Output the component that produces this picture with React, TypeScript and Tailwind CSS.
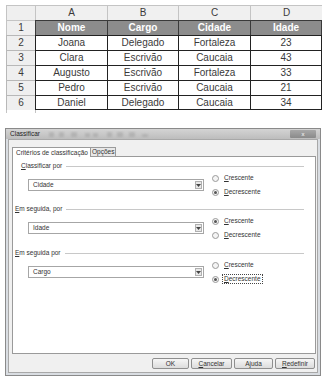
import React from 'react';

const cols = [
  { letter: 'A', w: 'w-[72px]' },
  { letter: 'B', w: 'w-[71px]' },
  { letter: 'C', w: 'w-[72px]' },
  { letter: 'D', w: 'w-[72px]' },
];

const rows = [
  ['Joana', 'Delegado', 'Fortaleza', '23'],
  ['Clara', 'Escrivão', 'Caucaia', '43'],
  ['Augusto', 'Escrivão', 'Fortaleza', '33'],
  ['Pedro', 'Escrivão', 'Caucaia', '21'],
  ['Daniel', 'Delegado', 'Caucaia', '34'],
];

const Sheet: React.FC = () => (
  <div className="ml-[6px] mt-[5px] font-['Liberation_Sans',Arial,sans-serif] text-[10px] text-[#3a3a3a]">
    {/* column letters */}
    <div className="flex h-[15px]">
      <div className="w-[29px] bg-[#efefef] border-t border-l border-[#c4c4c4]" />
      {cols.map(c => (
        <div key={c.letter} className={`${c.w} bg-[#f0f0f0] border-t border-l border-[#c4c4c4] flex items-center justify-center leading-none`}>
          {c.letter}
        </div>
      ))}
    </div>
    {/* header row */}
    <div className="flex h-[15px]">
      <div className="w-[29px] bg-[#efefef] border-t border-l border-[#c4c4c4] flex items-center justify-center leading-none">1</div>
      {['Nome', 'Cargo', 'Cidade', 'Idade'].map((t, i) => (
        <div key={t} className={`${cols[i].w} bg-[#8c8c8c] border-t border-l border-[#3a3a3a] ${i === 3 ? 'border-r' : ''} flex items-center justify-center text-white font-bold leading-none`}>
          {t}
        </div>
      ))}
    </div>
    {rows.map((r, ri) => (
      <div key={ri} className="flex h-[15px]">
        <div className="w-[29px] bg-[#efefef] border-t border-l border-[#b8b8b8] flex items-center justify-center leading-none">{ri + 2}</div>
        {r.map((t, i) => (
          <div key={i} className={`${cols[i].w} bg-white border-t border-l border-[#222] ${i === 3 ? 'border-r' : ''} ${ri === 4 ? 'border-b' : ''} flex items-center justify-center leading-none`}>
            {t}
          </div>
        ))}
      </div>
    ))}
    <div className="flex h-[3px]">
      <div className="w-[29px] border-l border-[#c4c4c4]" />
      <div className="w-[72px] border-l border-[#c4c4c4]" />
    </div>
  </div>
);

const Radio: React.FC<{ checked?: boolean; label: string; focus?: boolean }> = ({ checked, label, focus }) => (
  <div className="flex items-center h-[14px] gap-[3px]">
    <span className="w-[7px] h-[7px] rounded-full border border-[#9a9a9a] bg-[#f4f4f4] flex items-center justify-center">
      {checked && <span className="w-[3px] h-[3px] rounded-full bg-[#555]" />}
    </span>
    <span className={`px-[1px] leading-[8px] border border-dotted ${focus ? 'border-[#444]' : 'border-transparent'}`}>
      <span className="underline">{label[0]}</span>{label.slice(1)}
    </span>
  </div>
);

const Group: React.FC<{ label: string; value: string; desc: boolean; focus?: boolean; pl: string; mt: string }> = ({ label, value, desc, focus, pl, mt }) => (
  <div className={mt}>
    <div className={`flex items-center h-[10px] ${pl} pr-[11px] gap-[4px]`}>
      <span><span className="underline">{label[0]}</span>{label.slice(1)}</span>
      <div className="flex-1 h-px bg-[#c8c8c8]" />
    </div>
    <div className="flex items-center h-[28px] pl-[15px]">
      <div className="w-[176px] h-[12px] border border-[#a6a6a6] bg-white flex items-center pl-[4px] pr-[1px]">
        <span className="flex-1">{value}</span>
        <span className="w-[7px] h-[8px] border border-[#b0b0b0] bg-[#e8e8e8] flex items-center justify-center">
          <svg width="5" height="3" viewBox="0 0 5 3"><path d="M0 0h5L2.5 3z" fill="#444" /></svg>
        </span>
      </div>
      <div className="ml-[8px] flex flex-col">
        <Radio label="Crescente" checked={!desc} />
        <Radio label="Decrescente" checked={desc} focus={focus} />
      </div>
    </div>
  </div>
);

const Dialog: React.FC = () => (
  <div className="mt-[15px] ml-[5px] w-[316px] h-[248px] border border-[#8a8a8a] bg-[#d9dde2] px-[2px] pb-[2px] flex flex-col font-['Liberation_Sans',Arial,sans-serif] text-[6.5px] text-[#333]">
    {/* title bar */}
    <div className="h-[11px] flex items-center bg-gradient-to-b from-[#d4d4d4] to-[#bdbdbd] -mx-[2px] px-[4px]">
      <span className="text-[#222]">Classificar</span>
      <svg width="140" height="9" viewBox="0 0 140 9" className="ml-[5px] opacity-25">
        <defs><filter id="b"><feGaussianBlur stdDeviation="1" /></filter></defs>
        <g fill="#777" filter="url(#b)">
          <rect x="4" y="2" width="5" height="5" />
          <rect x="14" y="2" width="5" height="5" />
          <rect x="26" y="2" width="6" height="5" />
          <rect x="40" y="3" width="5" height="4" />
          <rect x="48" y="3" width="5" height="4" />
          <rect x="62" y="2" width="5" height="5" />
          <rect x="72" y="2" width="6" height="5" />
          <rect x="84" y="2" width="6" height="5" />
          <rect x="97" y="4" width="6" height="3" />
        </g>
      </svg>
      <div className="ml-auto w-[26px] h-[8px] rounded-[1px] bg-gradient-to-b from-[#a8a8a8] to-[#8a8a8a] flex items-center justify-center text-white text-[6px] leading-none">
        x
      </div>
    </div>
    <div className="flex-1 bg-[#f0f0f0] border border-[#a8a8a8] pl-[3px] pr-[1px] pt-[6px] pb-[3px] flex flex-col">
      {/* tabs */}
      <div className="flex h-[10px] items-end">
        <div className="h-[10px] w-[79px] bg-white border border-b-0 border-[#9a9a9a] flex items-center pl-[3px] relative top-px">
          Critérios de classificação
        </div>
        <div className="h-[9px] w-[25px] bg-[#e8e8e8] border border-l-0 border-b-0 border-[#9a9a9a] flex items-center pl-[1px]">
          Opções
        </div>
      </div>
      <div className="h-[198px] bg-white border border-[#9a9a9a] pt-[4px]">
        <Group label="Classificar por" value="Cidade" desc pl="pl-[8px]" mt="" />
        <Group label="Em seguida, por" value="Idade" desc={false} pl="pl-[2px]" mt="mt-[5px]" />
        <Group label="Em seguida por" value="Cargo" desc focus pl="pl-[2px]" mt="mt-[6px]" />
      </div>
      <div className="mt-[4px] flex justify-end gap-[2px] pr-[1px]">
        {['OK', 'Cancelar', 'Ajuda', 'Redefinir'].map((b, i) => (
          <div key={b} className={`${['w-[37px]', 'w-[41px]', 'w-[39px]', 'w-[40px]'][i]} h-[11px] border border-[#8f8f8f] rounded-[2px] bg-gradient-to-b from-[#f6f6f6] to-[#dcdcdc] flex items-center justify-center`}>
            {b === 'OK' ? 'OK' : b === 'Ajuda' ? <span>A<span className="underline">j</span>uda</span> : <span><span className="underline">{b[0]}</span>{b.slice(1)}</span>}
          </div>
        ))}
      </div>
    </div>
  </div>
);

export default function App() {
  return (
    <div className="w-[326px] h-[381px] bg-white overflow-hidden flex flex-col">
      <Sheet />
      <Dialog />
    </div>
  );
}
